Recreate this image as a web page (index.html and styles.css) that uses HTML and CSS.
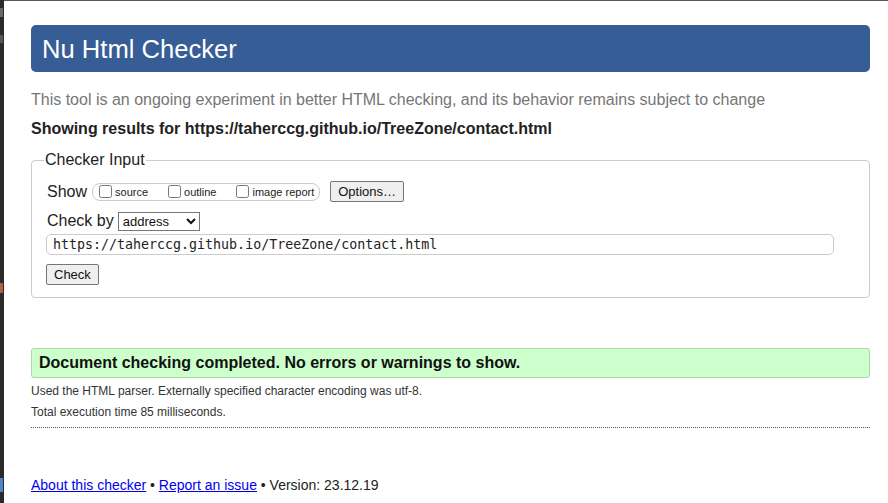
FILE: index.html
```html
<!DOCTYPE html>
<html lang="en">
<head>
<meta charset="utf-8">
<title>Showing results for https://taherccg.github.io/TreeZone/contact.html - Nu Html Checker</title>
<link rel="stylesheet" href="styles.css">
</head>
<body>
<div class="edge">
  <span class="mark mark-a"></span>
  <span class="mark mark-b"></span>
  <span class="mark mark-c"></span>
  <span class="mark mark-d"></span>
</div>
<main class="page">
  <h1 class="title">Nu Html Checker</h1>
  <p class="intro">This tool is an ongoing experiment in better HTML checking, and its behavior remains subject to change</p>
  <p class="showing">Showing results for https://taherccg.github.io/TreeZone/contact.html</p>
  <form class="form">
    <fieldset class="fieldset">
      <legend class="legend">Checker Input</legend>
      <div class="row">
        <span class="lbl">Show</span>
        <span class="opts">
          <label class="opt"><input type="checkbox" class="cb">source</label>
          <label class="opt"><input type="checkbox" class="cb">outline</label>
          <label class="opt"><input type="checkbox" class="cb">image report</label>
        </span>
        <button type="button" class="btn btn-options">Options…</button>
      </div>
      <div class="row row-by">
        <span class="lbl">Check by</span>
        <select class="sel"><option>address</option></select>
      </div>
      <input class="url" type="text" value="https://taherccg.github.io/TreeZone/contact.html">
      <div class="row row-check">
        <button type="button" class="btn btn-check">Check</button>
      </div>
    </fieldset>
  </form>
  <p class="success">Document checking completed. No errors or warnings to show.</p>
  <p class="detail">Used the HTML parser. Externally specified character encoding was utf-8.</p>
  <p class="detail">Total execution time 85 milliseconds.</p>
  <hr class="rule">
  <p class="footer"><a href="#">About this checker</a> • <a href="#">Report an issue</a> • Version: 23.12.19</p>
</main>
</body>
</html>
```
FILE: styles.css
```css
html, body {
  margin: 0;
  padding: 0;
  height: 100%;
  overflow: hidden;
}
body {
  display: flex;
  background: #fff;
  font-family: "Liberation Sans", Arial, sans-serif;
  color: #222;
}
.edge {
  width: 4px;
  flex: none;
  background: #2a2a2b;
  display: flex;
  flex-direction: column;
}
.mark { display: block; width: 3px; }
.mark-a { margin-top: 8px; height: 9px; background: #6c6a5e; }
.mark-b { margin-top: 18px; height: 8px; background: #5a5650; }
.mark-c { margin-top: 240px; height: 10px; background: #b0623a; }
.mark-d { margin-top: 185px; height: 14px; background: #4f86c6; }
.page {
  flex: 1;
  border-top: 1px solid #5c575e;
  padding: 24px 18px 0 27px;
}
.title {
  margin: 0;
  height: 47px;
  box-sizing: border-box;
  padding: 9px 11px 0;
  background: #365d95;
  border-radius: 5px;
  color: #fff;
  font-weight: normal;
  font-size: 25.6px;
  line-height: 30px;
}
.intro {
  margin: 18px 0 0;
  font-size: 16px;
  line-height: 20px;
  color: #767676;
}
.showing {
  margin: 9px 0 0;
  font-size: 16px;
  line-height: 20px;
  font-weight: bold;
  color: #222;
}
.form { margin: 12px 0 0; }
.fieldset {
  margin: 0;
  border: 1px solid #ccc;
  border-radius: 4px;
  padding: 12px 14px 12px 15px;
  min-width: 0;
}
.legend {
  padding: 0 1px;
  margin-left: -3px;
  font-size: 16px;
  line-height: 18px;
  color: #222;
}
.row {
  display: flex;
  align-items: center;
}
.lbl {
  font-size: 16px;
  line-height: 20px;
  color: #222;
  margin-right: 3px;
}
.opts {
  display: inline-flex;
  align-items: center;
  gap: 0;
  height: 18px;
  box-sizing: border-box;
  border: 1px solid #ccc;
  border-radius: 8px;
  padding: 0 5px 0 5px;
  margin-left: 2px;
}
.opt {
  display: inline-flex;
  align-items: center;
  font-size: 11px;
  color: #222;
  margin-right: 19px;
}
.opt:last-child { margin-right: 0; }
.cb {
  margin: 0 3px 0 1px;
  width: 13px;
  height: 13px;
}
.btn {
  font-family: "Liberation Sans", Arial, sans-serif;
  font-size: 13px;
  color: #111;
  background: #efefef;
  border: 1px solid #767676;
  border-radius: 2px;
  height: 21px;
  padding: 0 7px;
  line-height: 17px;
}
.btn-options { margin-left: 10px; }
.row-by { margin-top: 9px; }
.sel {
  font-family: "Liberation Sans", Arial, sans-serif;
  font-size: 13px;
  height: 19px;
  width: 82px;
  margin-left: 1px;
  color: #111;
  border: 1px solid #767676;
  border-radius: 0;
  background: #fff;
}
.url {
  display: block;
  margin: 3px 0 0 -1px;
  width: 788px;
  height: 21px;
  box-sizing: border-box;
  border: 1px solid #ccc;
  border-radius: 5px;
  padding: 0 6px;
  font-family: "DejaVu Sans Mono", monospace;
  font-size: 13.3px;
  color: #222;
}
.row-check { margin-top: 9px; margin-left: -1px; }
.btn-check { padding: 0 7px; height: 21px; }
.success {
  margin: 50px 0 0;
  height: 30px;
  box-sizing: border-box;
  background: #ccffcc;
  border: 1px solid #a9dba9;
  border-radius: 3px;
  padding: 0 7px;
  font-weight: bold;
  font-size: 16px;
  line-height: 28px;
  color: #111;
}
.detail {
  margin: 5px 0 0;
  font-size: 12px;
  line-height: 16px;
  color: #333;
}
.detail + .detail { margin-top: 5px; }
.rule {
  margin: 7px 0 0;
  border: 0;
  border-top: 1px dotted #555;
  height: 0;
}
.footer {
  margin: 48px 0 0;
  font-size: 14px;
  line-height: 18px;
  color: #222;
}
.footer a { color: #0000ee; }
```
